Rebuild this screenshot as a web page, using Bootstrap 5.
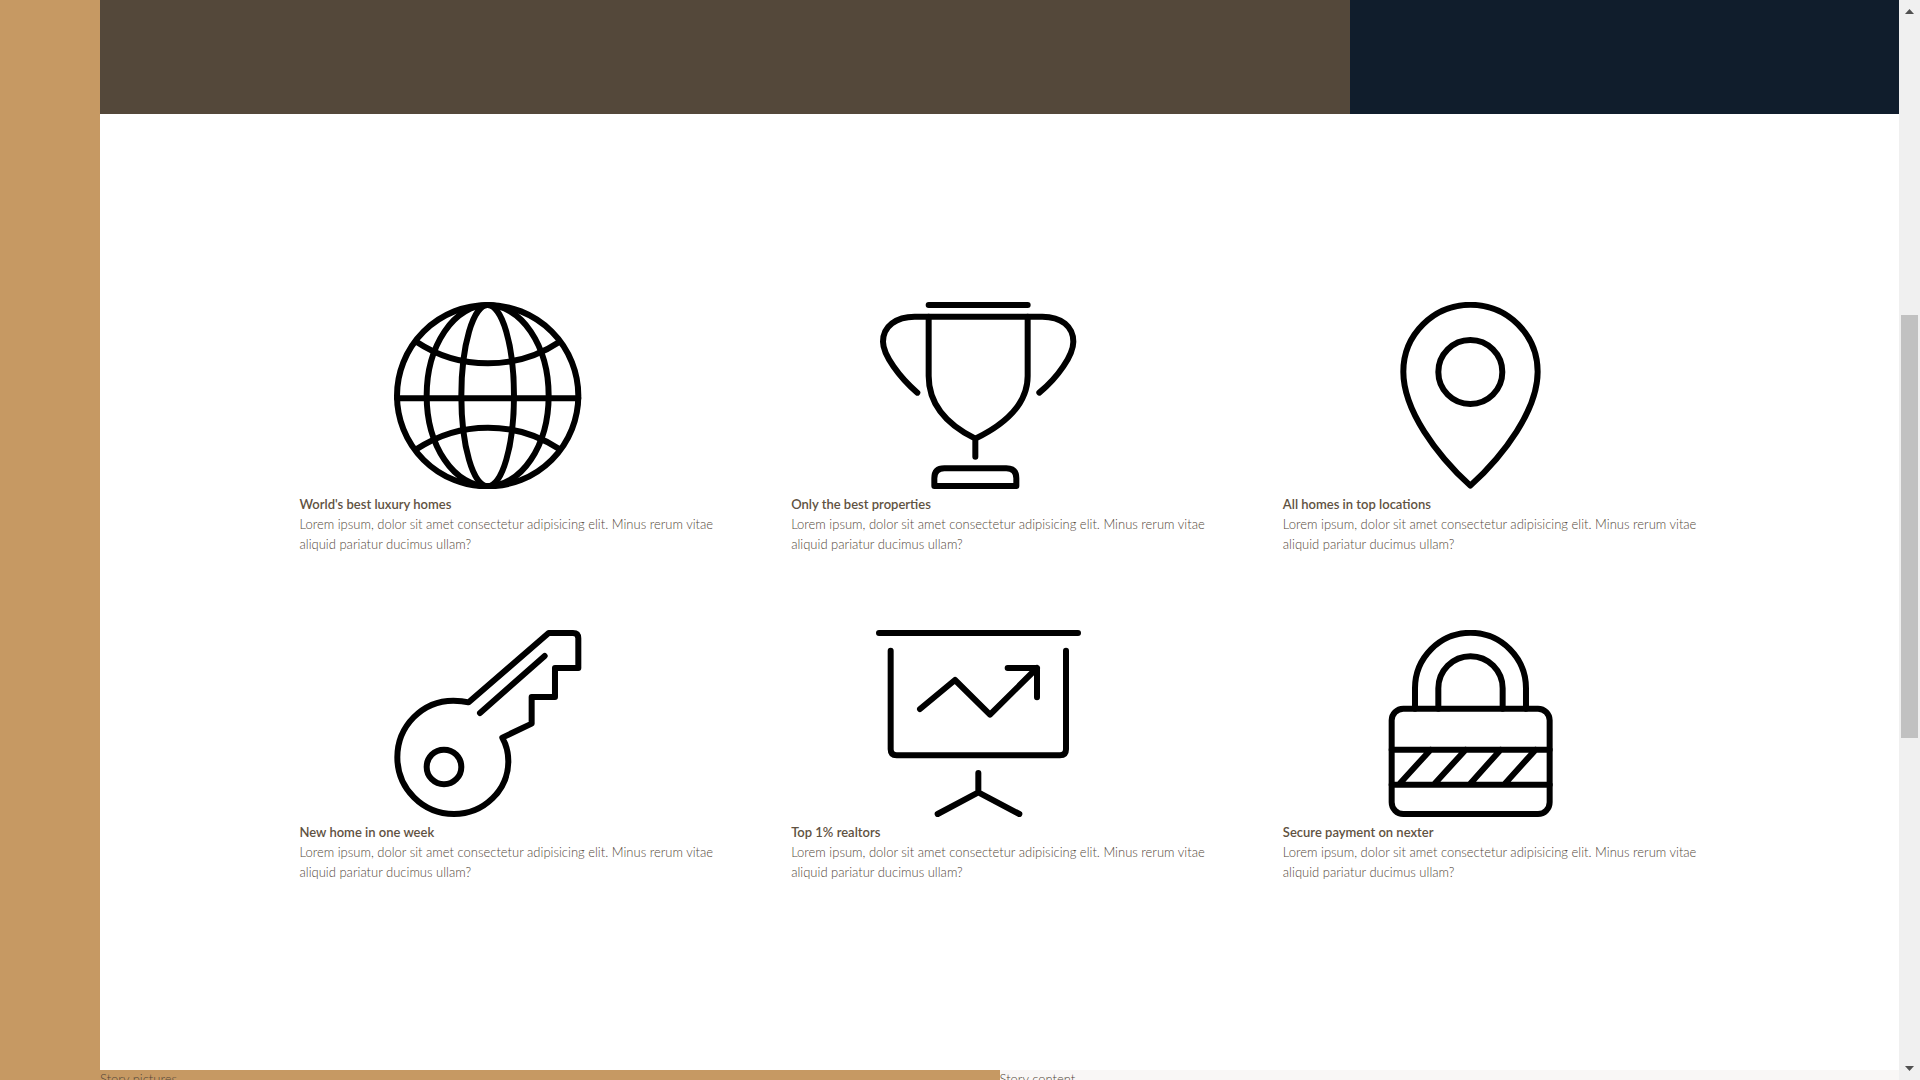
<!DOCTYPE html>
<html lang="en">
<head>
<meta charset="utf-8">
<meta name="viewport" content="width=device-width, initial-scale=1">
<title>Nexter</title>
<link href="https://cdn.jsdelivr.net/npm/bootstrap@5.3.0/dist/css/bootstrap.min.css" rel="stylesheet">
<style>
  body { font-family: Lato, "Open Sans", sans-serif; font-size: 13px; font-weight: 300; line-height: 20px; color: #54483a; background: #fff; }
  .side-strip { width: 100px; background: #c69963; }
  .hero-row { display: grid; grid-template-columns: 1250fr 549fr; height: 114px; }
  .hero-main { background: #54483a; }
  .hero-aside { background: #101d2c; }
  .features { padding: 188px 0; }
  .feature-grid { display: grid; grid-template-columns: repeat(3, 1fr); gap: 76px 75px; width: 100%; max-width: 1400px; }
  .feature-icon { display: block; width: 90%; margin-bottom: 5px; fill: none; stroke: #000; stroke-width: 18; stroke-linecap: round; stroke-linejoin: round; }
  .feature-title { font-size: 13px; font-weight: 600; line-height: 20px; color: #5f5242; }
  .story-row { line-height: 18px; }
  .story-pictures { background: #c69963; }
  .story-content { background: #f9f7f6; }
  .scroll-track { width: 21px; padding: 9px 2px; background: #f0f0f0; }
  .scroll-track svg { width: 9px; height: 5px; fill: #505050; }
  .scroll-thumb { margin-top: 301px; height: 423px; background: #c1c1c1; }
</style>
<script src="https://cdn.jsdelivr.net/npm/bootstrap@5.3.0/dist/js/bootstrap.bundle.min.js"></script>
</head>
<body>
<div class="d-flex vh-100 overflow-hidden">
  <div class="side-strip flex-shrink-0"></div>
  <main class="flex-grow-1 overflow-hidden">
    <div class="hero-row">
      <div class="hero-main"></div>
      <div class="hero-aside"></div>
    </div>

    <section class="features">
      <div class="feature-grid mx-auto">
        <div>
          <svg class="feature-icon" viewBox="29 36 1125 561" aria-hidden="true">
            <circle cx="592" cy="317" r="272"/>
            <ellipse cx="592" cy="317" rx="183" ry="272"/>
            <ellipse cx="592" cy="317" rx="79" ry="272"/>
            <path d="M320 325H864M378 155A388 388 0 0 0 808 155M378 478A388 388 0 0 1 808 478"/>
          </svg>
          <h4 class="feature-title mb-0">World's best luxury homes</h4>
          <p class="mb-0">Lorem ipsum, dolor sit amet consectetur adipisicing elit. Minus rerum vitae aliquid pariatur ducimus ullam?</p>
        </div>
        <div>
          <svg class="feature-icon" viewBox="34 36 1125 561" aria-hidden="true">
            <path d="M447 45H744M413 308C360 262 310 195 310 155C310 108 350 80 405 80H788C845 80 881 110 881 155C881 195 835 262 779 308"/>
            <path d="M447 80V258C447 350 510 408 587 446C665 408 744 350 744 258V80M587 446V500"/>
            <path d="M464 588V565Q464 535 494 535H680Q710 535 710 565V588Z"/>
          </svg>
          <h4 class="feature-title mb-0">Only the best properties</h4>
          <p class="mb-0">Lorem ipsum, dolor sit amet consectetur adipisicing elit. Minus rerum vitae aliquid pariatur ducimus ullam?</p>
        </div>
        <div>
          <svg class="feature-icon" viewBox="39 36 1125 561" aria-hidden="true">
            <path d="M601 587C500 495 400 360 400 245A201 200 0 0 1 803 245C803 360 702 495 601 587Z"/>
            <circle cx="601" cy="246" r="96"/>
          </svg>
          <h4 class="feature-title mb-0">All homes in top locations</h4>
          <p class="mb-0">Lorem ipsum, dolor sit amet consectetur adipisicing elit. Minus rerum vitae aliquid pariatur ducimus ullam?</p>
        </div>
        <div>
          <svg class="feature-icon" viewBox="29 30 1125 561" aria-hidden="true">
            <path d="M535 247L775 39H848Q864 39 864 55V144H794V231H724V311L636 353C648 374 654 398 654 424C654 510 581 582 491 582A170 170 0 0 1 321 412A168 170 0 0 1 489 242C505 242 520 243 535 247Z"/>
            <path d="M569 279L763 108"/>
            <circle cx="461" cy="441" r="52"/>
          </svg>
          <h4 class="feature-title mb-0">New home in one week</h4>
          <p class="mb-0">Lorem ipsum, dolor sit amet consectetur adipisicing elit. Minus rerum vitae aliquid pariatur ducimus ullam?</p>
        </div>
        <div>
          <svg class="feature-icon" viewBox="33 30 1125 561" aria-hidden="true">
            <path d="M297 39H894M332 92V388Q332 406 350 406H840Q858 406 858 388V92"/>
            <path d="M420 267L525 180L630 284L771 144M683 144H771V232"/>
            <path d="M595 459V517M473 582L595 517L718 582"/>
          </svg>
          <h4 class="feature-title mb-0">Top 1% realtors</h4>
          <p class="mb-0">Lorem ipsum, dolor sit amet consectetur adipisicing elit. Minus rerum vitae aliquid pariatur ducimus ullam?</p>
        </div>
        <div>
          <svg class="feature-icon" viewBox="39 30 1125 561" aria-hidden="true">
            <path d="M435 266V205A166 166 0 0 1 768 205V266M505 266V205A96 96 0 0 1 698 205V266"/>
            <rect x="365" y="266" width="474" height="316" rx="35"/>
            <path d="M365 389H839M365 494H839M386 494L482 389M491 494L587 389M598 494L692 389M702 494L797 389"/>
          </svg>
          <h4 class="feature-title mb-0">Secure payment on nexter</h4>
          <p class="mb-0">Lorem ipsum, dolor sit amet consectetur adipisicing elit. Minus rerum vitae aliquid pariatur ducimus ullam?</p>
        </div>
      </div>
    </section>

    <div class="row g-0 story-row">
      <div class="col-6 story-pictures">Story pictures</div>
      <div class="col-6 story-content">Story content</div>
    </div>
  </main>
  <div class="scroll-track d-flex flex-column flex-shrink-0" aria-hidden="true">
    <svg class="align-self-center flex-shrink-0" viewBox="0 0 9 5"><path d="M0 5L4.500 0L9 5Z"/></svg>
    <div class="scroll-thumb flex-shrink-0"></div>
    <svg class="align-self-center flex-shrink-0 mt-auto" viewBox="0 0 9 5"><path d="M0 0H9L4.500 5Z"/></svg>
  </div>
</div>
</body>
</html>
